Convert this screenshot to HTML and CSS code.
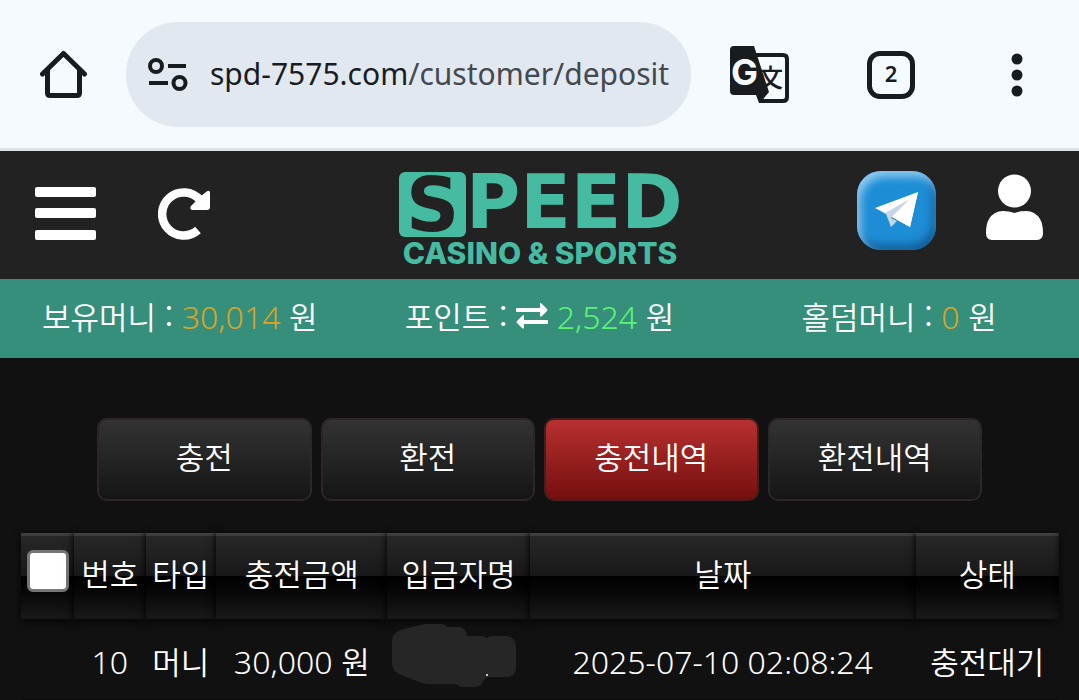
FILE: index.html
```html
<!DOCTYPE html>
<html lang="ko">
<head>
<meta charset="utf-8">
<meta name="viewport" content="width=device-width, initial-scale=1">
<title>SPEED Casino &amp; Sports</title>
<link rel="stylesheet" href="styles.css">
</head>
<body>
<div class="browser-bar">
  <button class="icon-btn" type="button" aria-label="Home">
    <svg width="48" height="50" viewBox="0 0 48 50" fill="none" stroke="#191c1f" stroke-width="5" stroke-linejoin="round" stroke-linecap="round"><path d="M2.500 24 23.500 3.500 44.500 24M7.500 20V43Q7.500 45.500 10 45.500H37Q39.500 45.500 39.500 43V20"/></svg>
  </button>
  <button class="address" type="button">
    <svg width="40" height="34" viewBox="0 0 40 34" fill="none" stroke="#191c1f" stroke-width="4"><circle cx="8" cy="8" r="6"/><path d="M20 8H38M1 25H20"/><circle cx="31.500" cy="25" r="6"/></svg>
    <span class="url"><span class="host">spd-7575.com</span>/customer/deposit</span>
  </button>
  <div class="browser-tools">
    <button class="icon-btn" type="button" aria-label="Translate">
      <svg width="59" height="60" viewBox="0 0 59 60"><path d="M26 10H53Q57 10 57 14V52Q57 56 53 56H30" fill="none" stroke="#191c1f" stroke-width="4"/><path d="M4 1H24L39 47 30 58H29L26 50H4Q0 50 0 46V5Q0 1 4 1Z" fill="#191c1f"/><text class="glyph-han" x="28" y="42">文</text><text class="glyph-g" x="1" y="40">G</text></svg>
    </button>
    <button class="tabs-btn" type="button" aria-label="Tabs">2</button>
    <button class="icon-btn" type="button" aria-label="More">
      <svg width="12" height="44" viewBox="0 0 12 44" fill="#191c1f"><circle cx="6" cy="6" r="5.500"/><circle cx="6" cy="22" r="5.500"/><circle cx="6" cy="38" r="5.500"/></svg>
    </button>
  </div>
</div>

<header class="site-header">
  <div class="header-left">
    <button class="icon-btn" type="button" aria-label="메뉴">
      <svg width="61" height="54" viewBox="0 0 61 54" fill="#fff"><rect width="61" height="10" rx="2"/><rect y="21" width="61" height="10" rx="2"/><rect y="43" width="61" height="10" rx="2"/></svg>
    </button>
    <button class="icon-btn" type="button" aria-label="새로고침">
      <svg width="53" height="53" viewBox="0 0 53 53"><path d="M40 42A21.500 21.500 0 1 1 42 12" fill="none" stroke="#fff" stroke-width="8.500"/><path d="M48 4Q52 1 52 5V19Q52 22 49 22H35Q31 22 33 18L38 13 43 8Z" fill="#fff"/></svg>
    </button>
  </div>
  <a class="logo" href="#" aria-label="SPEED Casino &amp; Sports">
    <svg width="282" height="96" viewBox="0 0 282 96">
      <rect width="67" height="65" rx="6" fill="#45bba2"/>
      <text class="logo-word logo-dark" x="7" y="59">S</text>
      <text class="logo-word" x="67" y="56">PEED</text>
      <text class="logo-sub" x="141" y="92">CASINO &amp; SPORTS</text>
    </svg>
  </a>
  <div class="header-right">
    <a class="telegram" href="#" aria-label="Telegram">
      <svg width="44" height="38" viewBox="0 0 44 38"><path d="M0 17 43 1 35 36 17 26Z" fill="#fff"/><path d="M0 17 10 22 35 8 16 27 22 30 16 36 11 23Z" fill="#c5d6e6"/><path d="M17 26 35 8 43 1 35 36Z" fill="#fff"/></svg>
    </a>
    <button class="icon-btn user" type="button" aria-label="내 정보">
      <svg width="59" height="67" viewBox="0 0 59 67" fill="#fff"><circle cx="29.500" cy="17" r="16.500"/><path d="M18 37Q24 37 29.500 39 35 37 41 37 50 37 55 45 58 50 58 59 58 66 52 66H7Q1 66 1 59 1 50 4 45 9 37 18 37Z"/></svg>
    </button>
  </div>
</header>

<div class="balance">
  <div>보유머니 : <span class="num gold">30,014</span> 원</div>
  <div>포인트 : <svg class="swap" width="32" height="26" viewBox="0 0 32 26" fill="#fff"><path d="M1 5H24V1Q24-1 26 1L31 6Q32 7 31 8L26 13Q24 14 24 13V9H1Q0 9 0 8V6Q0 5 1 5ZM31 17H8V13Q8 11 6 13L1 18Q0 19 1 20L6 25Q8 26 8 25V21H31Q32 21 32 20V18Q32 17 31 17Z"/></svg> <span class="num green">2,524</span> 원</div>
  <div>홀덤머니 : <span class="num gold">0</span> 원</div>
</div>

<main>
  <nav class="tabs">
    <button class="tab" type="button">충전</button>
    <button class="tab" type="button">환전</button>
    <button class="tab active" type="button">충전내역</button>
    <button class="tab" type="button">환전내역</button>
  </nav>
  <table class="history">
    <colgroup><col class="c-check"><col class="c-no"><col class="c-type"><col class="c-amount"><col class="c-name"><col class="c-date"><col class="c-state"></colgroup>
    <thead>
      <tr><th class="pick"><input class="check" type="checkbox" aria-label="전체 선택"></th><th>번호</th><th>타입</th><th>충전금액</th><th>입금자명</th><th>날짜</th><th>상태</th></tr>
    </thead>
    <tbody>
      <tr><td></td><td><span class="num">10</span></td><td>머니</td><td><span class="num">30,000</span> 원</td><td class="masked"><svg width="124" height="64" viewBox="0 0 124 64"><path d="M0 16Q0 8 12 5L28 1Q32 0 36 0H49Q53 0 55 3H66Q74 3 75 12H88Q93 12 95 14 98 12 101 12H113Q124 12 124 23V43Q124 53 115 53H95L91 57Q89 63 83 63H68L64 60H35Q31 60 7 50 0 47 0 38Z" fill="#262626"/><circle cx="95" cy="51" r="1" fill="#fff"/></svg></td><td><span class="num">2025-07-10 02:08:24</span></td><td>충전대기</td></tr>
    </tbody>
  </table>
</main>
</body>
</html>
```

FILE: styles.css
```css
* { box-sizing: border-box; }

body {
  margin: 0;
  background: #111;
  color: #fff;
  font: 350 31px/40px "Noto Sans CJK KR", sans-serif;
}

button { font: inherit; color: inherit; cursor: pointer; }
svg { display: block; }

.icon-btn { padding: 0; border: 0; background: none; }

.browser-bar {
  display: flex;
  align-items: center;
  padding: 22px 56px 21px 40px;
  border-bottom: 3px solid #dce2e7;
  background: #f5faff;
}

.address {
  display: flex;
  align-items: center;
  gap: 22px;
  flex: 0 0 auto;
  height: 105px;
  margin-left: 38px;
  padding: 0 22px;
  border: 0;
  border-radius: 52px;
  background: #e2e8f0;
}

.url {
  padding-bottom: 2px;
  color: #42494f;
  font: 400 30px/40px "Noto Sans", sans-serif;
  white-space: nowrap;
}
.host { color: #191c1f; }

.browser-tools {
  display: flex;
  flex: 1;
  align-items: center;
  justify-content: space-between;
  margin-left: 39px;
}

.glyph-g { font: 700 36px Inter, sans-serif; fill: #f5faff; }
.glyph-han { font: 500 25px "Noto Sans CJK SC", sans-serif; fill: #191c1f; }

.tabs-btn {
  width: 48px;
  height: 48px;
  margin-right: 18px;
  padding: 0 0 4px;
  border: 5px solid #191c1f;
  border-radius: 13px;
  background: none;
  color: #191c1f;
  font: 600 22px/32px "Noto Sans", sans-serif;
}

.site-header {
  display: grid;
  grid-template-columns: 1fr auto 1fr;
  align-items: center;
  height: 128px;
  padding: 0 35px;
  background: #222;
}
.header-left, .header-right { display: flex; align-items: center; }
.header-left { gap: 62px; padding-bottom: 2px; }
.header-right { justify-content: flex-end; gap: 49px; padding-bottom: 10px; }
.logo { padding-top: 10px; }
.logo-word { font: 700 74px "DejaVu Sans", sans-serif; fill: #45bba2; }
.logo-word.logo-dark { fill: #222; }
.logo-sub { font: 800 30px Inter, sans-serif; fill: #45bba2; text-anchor: middle; }

.telegram {
  display: grid;
  place-items: center;
  width: 79px;
  height: 79px;
  border-radius: 24px;
  background: #1d8dd6;
  box-shadow: inset 4px 6px 8px #8fc8ef, inset -3px -5px 8px #125b92;
}
.user { padding-bottom: 6px; }

.balance {
  display: grid;
  grid-template-columns: repeat(3, 1fr);
  padding: 17px 0 21px;
  background: #358f7a;
  text-align: center;
  white-space: nowrap;
}
.num { font-family: "Noto Sans", "Open Sans", sans-serif; font-size: 32px; font-weight: 350; }
.gold { color: #d9a428; }
.green { color: #5cf573; }
.swap { display: inline-block; }

.tabs {
  display: grid;
  grid-template-columns: repeat(4, 1fr);
  gap: 9px;
  padding: 60px 97px 32px;
}
.tab {
  padding: 16px 0 23px;
  border: 2px solid #2d2526;
  border-radius: 10px;
  background: linear-gradient(#333, #151515);
}
.tab.active {
  border-color: #41201f;
  background: linear-gradient(#b83030, #750f0f);
}

.history {
  width: calc(100% - 41px);
  margin: 0 20px 0 21px;
  border-collapse: collapse;
  table-layout: fixed;
  white-space: nowrap;
  text-align: center;
}
.c-check { width: 5.1%; }
.c-no { width: 6.9%; }
.c-type { width: 6.8%; }
.c-amount { width: 16.5%; }
.c-name { width: 13.7%; }
.c-date { width: 37.2%; }
.c-state { width: 13.8%; }

.history th {
  height: 86px;
  padding: 0 0 6px;
  background: linear-gradient(#444 0, #3a3a3a 3px, #272727 3px, #181818 50%, #000 50%, #050505 65%, #191919);
  box-shadow: inset -5px 0 5px -4px #0008, 0 3px 8px #000a;
  font-weight: inherit;
}
.history .pick { padding: 0 0 10px 2px; }
.history td { height: 80px; padding: 5px 0 0; }
.history tbody tr { border-bottom: 1px solid #090909; }
.history .masked { padding: 0 0 6px; }
.masked svg { margin: 0 auto 0 5px; }

.check {
  display: block;
  width: 42px;
  height: 42px;
  margin: 0 auto;
  appearance: none;
  border: 3px solid #767676;
  border-radius: 6px;
  background: #fff;
}
```
